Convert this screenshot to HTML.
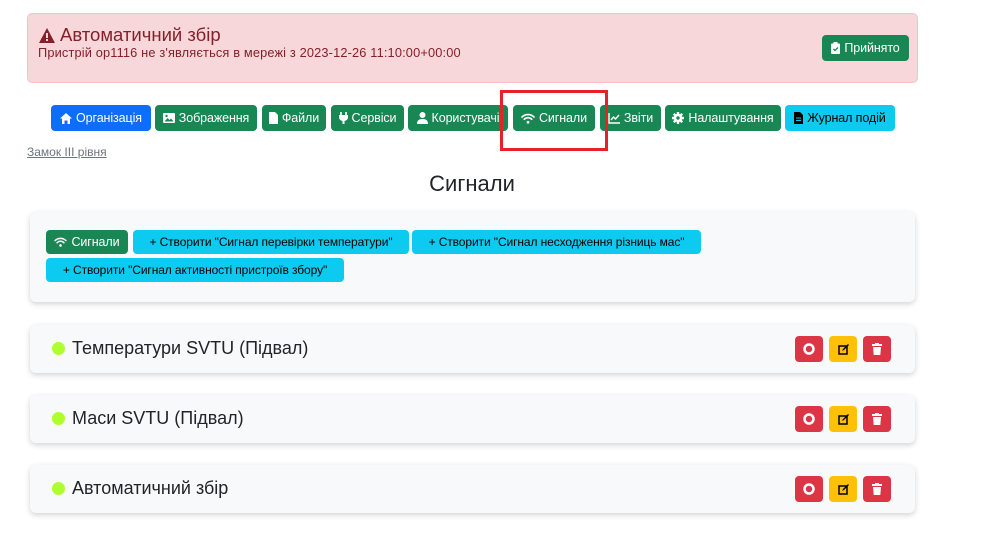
<!DOCTYPE html>
<html><head><meta charset="utf-8"><style>
*{box-sizing:border-box;margin:0;padding:0}
body{width:1004px;height:552px;background:#fff;font-family:"Liberation Sans","DejaVu Sans",sans-serif;position:relative;overflow:hidden;color:#212529}
.a{position:absolute}
.alert{left:27px;top:13px;width:891px;height:70px;background:#f8d7da;border:1px solid #f5c2c7;border-radius:5px;color:#842029}
.btn{position:absolute;display:flex;align-items:center;justify-content:center;gap:4px;border-radius:4px;color:#fff;font-size:12.5px;white-space:nowrap;letter-spacing:-0.1px}
.g{background:#198754;border:1px solid #198754}
.b{background:#0d6efd}
.c{background:#0dcaf0;color:#000}
.r{background:#dc3545}
.y{background:#ffc107}
.card{position:absolute;left:30px;width:885px;background:#f8f9fa;border-radius:6px;box-shadow:0 2px 6px rgba(0,0,0,.18)}
.dot{position:absolute;left:22px;width:13px;height:13px;border-radius:50%;background:#adff2f}
.t{position:absolute;left:42px;font-size:18px;color:#212529}
svg{display:block}
</style></head><body>
<div class="a alert">
 <div class="a" style="left:11px;top:10px;font-size:18.5px;display:flex;align-items:center;gap:5px"><svg width="16" height="15" viewBox="0 0 16 15"><path d="M8 0L16 15H0Z" fill="#842029"/><rect x="7" y="5" width="2" height="5" fill="#f8d7da"/><rect x="7" y="11" width="2" height="2" fill="#f8d7da"/></svg>Автоматичний збір</div>
 <div class="a" style="left:10px;top:31px;font-size:12.8px;letter-spacing:0.15px">Пристрій op1116 не з'являється в мережі з 2023-12-26 11:10:00+00:00</div>
 <div class="btn g" style="left:794px;top:21px;width:87px;height:26px"><svg width="9" height="12" viewBox="0 0 9 12"><rect x="0" y="1.5" width="9" height="10.5" rx="1" fill="#fff"/><rect x="2.5" y="0" width="4" height="3" fill="#fff"/><path d="M2.5 7l1.5 1.5 3-3" stroke="#198754" stroke-width="1.3" fill="none"/></svg>Прийнято</div>
</div>

<div class="btn b" style="left:51px;top:105px;width:100px;height:26px"><svg width="12" height="11" viewBox="0 0 12 11"><path d="M6 0L12 5.5H10V11H7.5V7.5H4.5V11H2V5.5H0Z" fill="#fff"/></svg>Організація</div>
<div class="btn g" style="left:155px;top:105px;width:102px;height:26px"><svg width="12" height="10" viewBox="0 0 12 10"><rect width="12" height="10" rx="1" fill="#fff"/><path d="M1.5 8.5L4.5 5l2 2 1.5-1.5 2.5 3z" fill="#198754"/><circle cx="3.5" cy="3" r="1.2" fill="#198754"/></svg>Зображення</div>
<div class="btn g" style="left:262px;top:105px;width:64px;height:26px"><svg width="9" height="12" viewBox="0 0 9 12"><path d="M0 0H6L9 3V12H0Z" fill="#fff"/></svg>Файли</div>
<div class="btn g" style="left:331px;top:105px;width:73px;height:26px"><svg width="9" height="12" viewBox="0 0 9 12"><path d="M2 0v3M7 0v3" stroke="#fff" stroke-width="1.6"/><path d="M0 3H9V6A4.5 4.5 0 0 1 5.5 9V12H3.5V9A4.5 4.5 0 0 1 0 6Z" fill="#fff"/></svg>Сервіси</div>
<div class="btn g" style="left:408px;top:105px;width:100px;height:26px"><svg width="11" height="12" viewBox="0 0 11 12"><circle cx="5.5" cy="3" r="3" fill="#fff"/><path d="M0 12C0 8 2.5 7 5.5 7S11 8 11 12Z" fill="#fff"/></svg>Користувачі</div>
<div class="btn g" style="left:513px;top:105px;width:82px;height:26px"><svg width="14" height="11" viewBox="0 0 14 11"><path d="M1 4a8.5 8.5 0 0 1 12 0M3.2 6.3a5.3 5.3 0 0 1 7.6 0" stroke="#fff" stroke-width="1.6" fill="none" stroke-linecap="round"/><circle cx="7" cy="9.3" r="1.4" fill="#fff"/></svg>Сигнали</div>
<div class="btn g" style="left:600px;top:105px;width:61px;height:26px"><svg width="12" height="11" viewBox="0 0 12 11"><path d="M1 0V10H12" stroke="#fff" stroke-width="1.4" fill="none"/><path d="M3 7l2.5-3 2 2L11 2" stroke="#fff" stroke-width="1.4" fill="none"/></svg>Звіти</div>
<div class="btn g" style="left:665px;top:105px;width:116px;height:26px"><svg width="12" height="12" viewBox="0 0 12 12"><circle cx="6" cy="6" r="4.2" fill="#fff"/><path d="M6 0v12M0 6h12M1.8 1.8l8.4 8.4M10.2 1.8l-8.4 8.4" stroke="#fff" stroke-width="2.4"/><circle cx="6" cy="6" r="1.7" fill="#198754"/></svg>Налаштування</div>
<div class="btn c" style="left:785px;top:105px;width:110px;height:26px"><svg width="9" height="12" viewBox="0 0 9 12"><path d="M0 0H6L9 3V12H0Z" fill="#000"/><path d="M2 6h5M2 8.5h5" stroke="#0dcaf0" stroke-width="1"/></svg>Журнал подій</div>

<div class="a" style="left:500px;top:90px;width:108px;height:61px;border:3px solid #e8202a"></div>

<div class="a" style="left:27px;top:145px;font-size:12px;color:#6c757d;text-decoration:underline">Замок III рівня</div>
<div class="a" style="left:0;width:944px;top:171px;text-align:center;font-size:22px">Сигнали</div>

<div class="card" style="top:212px;height:90px">
 <div class="btn g" style="left:16px;top:18px;width:82px;height:24px"><svg width="13" height="10" viewBox="0 0 14 11"><path d="M1 4a8.5 8.5 0 0 1 12 0M3.2 6.3a5.3 5.3 0 0 1 7.6 0" stroke="#fff" stroke-width="1.6" fill="none" stroke-linecap="round"/><circle cx="7" cy="9.3" r="1.4" fill="#fff"/></svg>Сигнали</div>
 <div class="btn c" style="left:103px;top:18px;width:276px;height:24px;font-size:12px">+ Створити "Сигнал перевірки температури"</div>
 <div class="btn c" style="left:382px;top:18px;width:289px;height:24px;font-size:12px">+ Створити "Сигнал несходження різниць мас"</div>
 <div class="btn c" style="left:16px;top:46px;width:298px;height:24px;font-size:12px">+ Створити "Сигнал активності пристроїв збору"</div>
</div>

<div class="card" style="top:325px;height:48px"><div class="dot" style="top:17px"></div><div class="t" style="top:13px">Температури SVTU (Підвал)</div>
 <div class="btn r" style="left:765px;top:11px;width:28px;height:26px"><svg width="12" height="12"><circle cx="6" cy="6" r="4.5" stroke="#fff" stroke-width="2.5" fill="none"/></svg></div>
 <div class="btn y" style="left:799px;top:11px;width:28px;height:26px"><svg width="11" height="11" viewBox="0 0 11 11"><rect x="1" y="2" width="8" height="8" stroke="#000" stroke-width="1.5" fill="none"/><path d="M4 7l1-2 5-5 1 1-5 5z" fill="#000"/></svg></div>
 <div class="btn r" style="left:833px;top:11px;width:28px;height:26px"><svg width="10" height="12" viewBox="0 0 10 12"><rect x="0" y="1" width="10" height="2" fill="#fff"/><rect x="3" y="0" width="4" height="2" fill="#fff"/><path d="M1 4H9L8.3 12H1.7Z" fill="#fff"/></svg></div>
</div>
<div class="card" style="top:395px;height:48px"><div class="dot" style="top:17px"></div><div class="t" style="top:13px">Маси SVTU (Підвал)</div>
 <div class="btn r" style="left:765px;top:11px;width:28px;height:26px"><svg width="12" height="12"><circle cx="6" cy="6" r="4.5" stroke="#fff" stroke-width="2.5" fill="none"/></svg></div>
 <div class="btn y" style="left:799px;top:11px;width:28px;height:26px"><svg width="11" height="11" viewBox="0 0 11 11"><rect x="1" y="2" width="8" height="8" stroke="#000" stroke-width="1.5" fill="none"/><path d="M4 7l1-2 5-5 1 1-5 5z" fill="#000"/></svg></div>
 <div class="btn r" style="left:833px;top:11px;width:28px;height:26px"><svg width="10" height="12" viewBox="0 0 10 12"><rect x="0" y="1" width="10" height="2" fill="#fff"/><rect x="3" y="0" width="4" height="2" fill="#fff"/><path d="M1 4H9L8.3 12H1.7Z" fill="#fff"/></svg></div>
</div>
<div class="card" style="top:465px;height:48px"><div class="dot" style="top:17px"></div><div class="t" style="top:13px">Автоматичний збір</div>
 <div class="btn r" style="left:765px;top:11px;width:28px;height:26px"><svg width="12" height="12"><circle cx="6" cy="6" r="4.5" stroke="#fff" stroke-width="2.5" fill="none"/></svg></div>
 <div class="btn y" style="left:799px;top:11px;width:28px;height:26px"><svg width="11" height="11" viewBox="0 0 11 11"><rect x="1" y="2" width="8" height="8" stroke="#000" stroke-width="1.5" fill="none"/><path d="M4 7l1-2 5-5 1 1-5 5z" fill="#000"/></svg></div>
 <div class="btn r" style="left:833px;top:11px;width:28px;height:26px"><svg width="10" height="12" viewBox="0 0 10 12"><rect x="0" y="1" width="10" height="2" fill="#fff"/><rect x="3" y="0" width="4" height="2" fill="#fff"/><path d="M1 4H9L8.3 12H1.7Z" fill="#fff"/></svg></div>
</div>
</body></html>
